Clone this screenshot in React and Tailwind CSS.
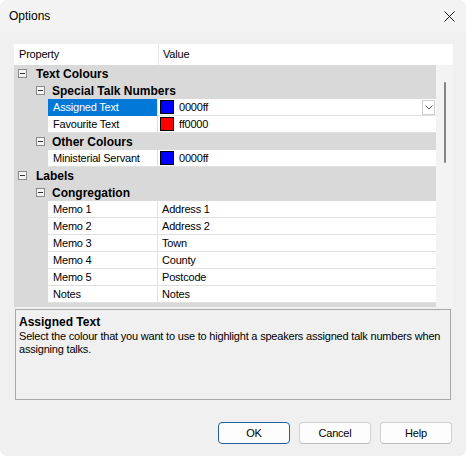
import React from 'react';

const rows = [
  { type: 'cat', level: 0, label: 'Text Colours' },
  { type: 'cat', level: 1, label: 'Special Talk Numbers' },
  { type: 'prop', label: 'Assigned Text', value: '0000ff', swatch: 'bg-[#0000ff]', selected: true },
  { type: 'prop', label: 'Favourite Text', value: 'ff0000', swatch: 'bg-[#ff0000]' },
  { type: 'cat', level: 1, label: 'Other Colours' },
  { type: 'prop', label: 'Ministerial Servant', value: '0000ff', swatch: 'bg-[#0000ff]' },
  { type: 'cat', level: 0, label: 'Labels' },
  { type: 'cat', level: 1, label: 'Congregation' },
  { type: 'prop', label: 'Memo 1', value: 'Address 1' },
  { type: 'prop', label: 'Memo 2', value: 'Address 2' },
  { type: 'prop', label: 'Memo 3', value: 'Town' },
  { type: 'prop', label: 'Memo 4', value: 'County' },
  { type: 'prop', label: 'Memo 5', value: 'Postcode' },
  { type: 'prop', label: 'Notes', value: 'Notes' },
  { type: 'cat', level: 1, label: 'Talk Coordinator' },
];

const MinusBox = () => (
  <span className="w-[9px] h-[9px] border border-[#8a8a8a] bg-[#f4f4f4] flex items-center justify-center shrink-0">
    <span className="w-[5px] h-px bg-[#333]" />
  </span>
);

const CategoryRow = ({ row }) => (
  <div className={`h-[17px] shrink-0 flex items-center bg-[#d9d9d9] ${row.level === 0 ? 'pl-[4px]' : 'pl-[22px]'}`}>
    <MinusBox />
    <span className={`${row.level === 0 ? 'ml-[9px]' : 'ml-[7px]'} text-[12px] font-bold text-black leading-none`}>{row.label}</span>
  </div>
);

const PropRow = ({ row }) => (
  <div className="h-[17px] shrink-0 flex bg-[#d9d9d9]">
    <div className="w-[34px] shrink-0" />
    <div
      className={`w-[110px] shrink-0 flex items-center pl-[5px] border-r border-[#e0e0e0] text-[11px] tracking-[-0.2px] ${
        row.selected ? 'bg-[#0078d7] text-white' : 'bg-white text-black border-b'
      }`}
    >
      {row.label}
    </div>
    <div className="flex-1 flex items-center bg-white border-b border-[#e0e0e0] pl-[2px] text-[11px] tracking-[-0.2px] text-black">
      {row.swatch ? (
        <>
          <span className={`w-[14px] h-[14px] border border-black ${row.swatch} shrink-0`} />
          <span className="ml-[5px]">{row.value}</span>
        </>
      ) : (
        <span className="ml-[2px]">{row.value}</span>
      )}
      {row.selected && (
        <span className="ml-auto mr-[1px] w-[13px] h-[15px] border border-[#d0d0d0] bg-white flex items-center justify-center">
          <svg width="8" height="5" viewBox="0 0 8 5">
            <path d="M0.5 0.5 L4 4 L7.5 0.5" fill="none" stroke="#555" strokeWidth="1" />
          </svg>
        </span>
      )}
    </div>
  </div>
);

const Button = ({ children, primary }) => (
  <button
    className={`w-[72px] h-[22px] rounded-[4px] bg-[#fdfdfd] text-[11px] tracking-[-0.2px] text-black flex items-center justify-center border ${
      primary ? 'border-[#1f5f9a]' : 'border-[#d0d0d0] border-b-[#bcbcbc]'
    }`}
  >
    {children}
  </button>
);

export default function App() {
  return (
    <div className="w-[466px] h-[456px] bg-white font-['Liberation_Sans',Arial,sans-serif]">
      <div className="w-full h-full bg-[#f0f0f0] rounded-[7px] overflow-hidden flex flex-col">
        <div className="h-[32px] shrink-0 bg-[#f3f3f3] flex items-center justify-between pl-[9px] pr-[11px]">
          <span className="text-[12px] text-black">Options</span>
          <svg width="11" height="11" viewBox="0 0 11 11">
            <path d="M0.5 0.5 L10.5 10.5 M10.5 0.5 L0.5 10.5" stroke="#1a1a1a" strokeWidth="1" fill="none" />
          </svg>
        </div>

        <div className="flex flex-col pl-[14px] pr-[13px] pt-[12px]">
          <div className="h-[21px] shrink-0 bg-white flex text-[11px] tracking-[-0.2px] text-black">
            <div className="w-[145px] border-r border-[#e6e6e6] flex items-center pl-[5px]">Property</div>
            <div className="flex items-center pl-[4px]">Value</div>
          </div>

          <div className="h-[242px] shrink-0 flex overflow-hidden">
            <div className="w-[422px] shrink-0 flex flex-col">
              {rows.map((row, i) =>
                row.type === 'cat' ? <CategoryRow key={i} row={row} /> : <PropRow key={i} row={row} />
              )}
            </div>
            <div className="flex-1 bg-[#f3f3f3] flex justify-center pt-[17px]">
              <div className="w-[2px] h-[81px] rounded-full bg-[#858585]" />
            </div>
          </div>

          <div className="mt-[2px] ml-[1px] mr-[2px] h-[91px] shrink-0 border border-[#a8a8a8] px-[3px] pt-[4px] text-black">
            <div className="text-[12px] font-bold leading-[16px]">Assigned Text</div>
            <p className="text-[11px] tracking-[-0.2px] leading-[13px] w-[428px]">
              Select the colour that you want to use to highlight a speakers assigned talk numbers when assigning talks.
            </p>
          </div>

          <div className="mt-[22px] flex justify-end gap-[9px] pr-[1px]">
            <Button primary>OK</Button>
            <Button>Cancel</Button>
            <Button>Help</Button>
          </div>
        </div>
      </div>
    </div>
  );
}
